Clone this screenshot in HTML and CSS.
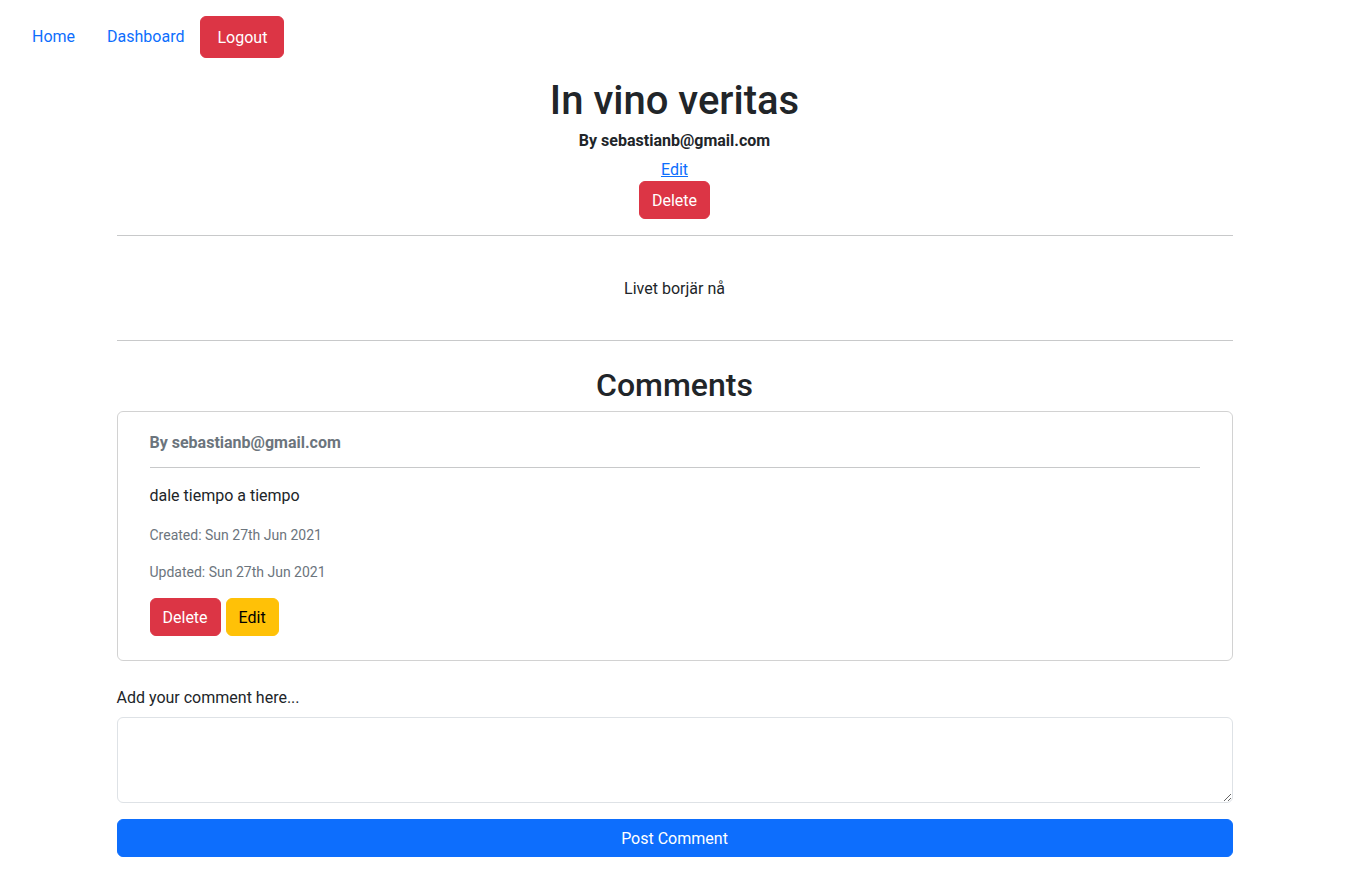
FILE: index.html
```html
<!DOCTYPE html>
<html lang="en">
<head>
<meta charset="utf-8">
<title>In vino veritas</title>
<link rel="stylesheet" href="styles.css">
</head>
<body>
<nav class="topnav">
  <a class="nav-link" href="#">Home</a>
  <a class="nav-link" href="#">Dashboard</a>
  <button class="btn btn-danger nav-btn" type="button">Logout</button>
</nav>
<main class="container">
  <header class="post-head">
    <h1 class="post-title">In vino veritas</h1>
    <h6 class="post-author">By sebastianb@gmail.com</h6>
    <div class="post-edit"><a href="#">Edit</a></div>
    <div><button class="btn btn-danger" type="button">Delete</button></div>
  </header>
  <hr class="rule rule-top">
  <section class="post-body">
    <p>Livet borjär nå</p>
  </section>
  <hr class="rule rule-bottom">
  <h2 class="comments-title">Comments</h2>
  <div class="card">
    <h6 class="comment-author">By sebastianb@gmail.com</h6>
    <hr class="card-rule">
    <p class="comment-text">dale tiempo a tiempo</p>
    <p class="comment-meta">Created: Sun 27th Jun 2021</p>
    <p class="comment-meta comment-meta-last">Updated: Sun 27th Jun 2021</p>
    <div class="comment-actions">
      <button class="btn btn-danger" type="button">Delete</button>
      <button class="btn btn-warning" type="button">Edit</button>
    </div>
  </div>
  <form class="comment-form">
    <label class="form-label" for="comment">Add your comment here...</label>
    <textarea class="form-control" id="comment" rows="3"></textarea>
    <button class="btn btn-primary btn-block" type="button">Post Comment</button>
  </form>
</main>
</body>
</html>
```

FILE: styles.css
```css
* { box-sizing: border-box; }

body {
  margin: 0;
  font-family: "Segoe UI", Roboto, "Liberation Sans", sans-serif;
  font-size: 16px;
  line-height: 1.5;
  color: #212529;
  background: #fff;
}

a { color: #0d6efd; }

.topnav {
  display: flex;
  align-items: center;
  padding: 16px 16px 0;
}

.nav-link {
  display: block;
  padding: 8px 16px;
  text-decoration: none;
  color: #0d6efd;
}

.btn {
  display: inline-block;
  font-family: inherit;
  font-size: 16px;
  line-height: 24px;
  padding: 7px 12px 5px;
  border: 1px solid transparent;
  border-radius: 6px;
  cursor: pointer;
  text-align: center;
  vertical-align: middle;
}

.nav-btn { padding: 9px 16px 7px; }

.btn-danger { background: #dc3545; border-color: #dc3545; color: #fff; }
.btn-warning { background: #ffc107; border-color: #ffc107; color: #000; }
.btn-primary { background: #0d6efd; border-color: #0d6efd; color: #fff; }

.container {
  width: 100%;
  max-width: 1140px;
  padding: 0 12px;
  margin: 0 auto;
}

.post-head { text-align: center; }

.post-title {
  margin: 19px 0 5px;
  font-size: 40px;
  font-weight: 500;
  line-height: 1.2;
}

.post-author {
  margin: 0 0 7px;
  padding-top: 1px;
  font-size: 16px;
  font-weight: 700;
  line-height: 1.2;
}

.post-edit {
  height: 24px;
  padding-top: 1px;
  line-height: 24px;
}

.rule {
  border: 0;
  border-top: 1px solid #c8c9ca;
  margin: 16px 0;
}

.post-body {
  padding: 25px 0 23px;
  text-align: center;
}

.post-body p { margin: 0; }

.rule-bottom { margin-bottom: 0; }

.comments-title {
  margin: 25px 0 6px;
  text-align: center;
  font-size: 32px;
  font-weight: 500;
  line-height: 1.2;
}

.card {
  border: 1px solid rgba(0, 0, 0, 0.175);
  border-radius: 6px;
  padding: 19px 32px 24px;
}

.comment-author {
  margin: 0;
  font-size: 16px;
  font-weight: 700;
  line-height: 24px;
  color: #6c757d;
}

.card-rule {
  border: 0;
  border-top: 1px solid #c8c9ca;
  margin: 12px 0 16px;
}

.comment-text { margin: 0 0 17px; }

.comment-meta {
  margin: 0 0 16px;
  font-size: 14px;
  line-height: 21px;
  color: #6c757d;
}

.comment-meta-last { margin-bottom: 15px; }

.comment-actions {
  display: flex;
  gap: 5px;
}

.comment-form { margin-top: 24px; }

.form-label {
  display: block;
  padding-top: 1px;
  margin-bottom: 7px;
}

.form-control {
  display: block;
  width: 100%;
  height: 86px;
  padding: 6px 12px;
  font-family: inherit;
  font-size: 16px;
  line-height: 24px;
  border: 1px solid #dee2e6;
  border-radius: 6px;
  resize: vertical;
}

.btn-block {
  display: block;
  width: 100%;
  margin-top: 16px;
}
```
